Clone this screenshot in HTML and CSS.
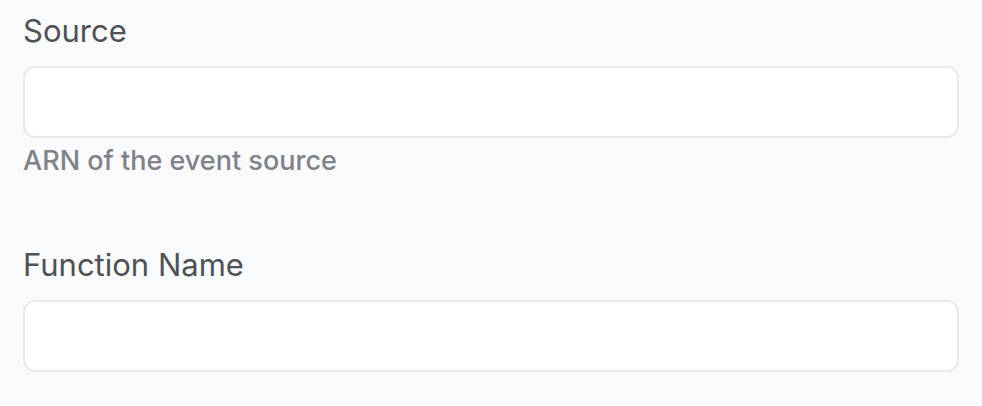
FILE: index.html
```html
<!DOCTYPE html>
<html lang="en">
<head>
<meta charset="utf-8">
<title>Event source</title>
<link rel="stylesheet" href="styles.css">
</head>
<body>
<form class="form">
  <div class="field">
    <label class="label" for="source">Source</label>
    <input class="input" id="source" type="text" aria-describedby="source-help">
    <p class="help" id="source-help">ARN of the event source</p>
  </div>
  <div class="field">
    <label class="label" for="function-name">Function Name</label>
    <input class="input" id="function-name" type="text">
  </div>
</form>
</body>
</html>
```
FILE: styles.css
```css
* {
  box-sizing: border-box;
}

body {
  margin: 0;
  background: #f9fafc;
  font-family: Inter, "Liberation Sans", sans-serif;
}

.form {
  display: flex;
  flex-direction: column;
  gap: 66px;
  padding: 12px 23px 32px;
}

.field {
  display: flex;
  flex-direction: column;
}

.label {
  margin-bottom: 16px;
  color: #505154;
  font-size: 31px;
  line-height: 38px;
}

.input {
  width: 100%;
  height: 72px;
  padding: 0 20px;
  border: 2px solid #e8e9ee;
  border-radius: 12px;
  background: #fff;
  color: #505154;
  font: inherit;
  font-size: 31px;
}

.help {
  margin: 4px 0 0;
  color: #808287;
  font-size: 27px;
  font-weight: 500;
  line-height: 38px;
}
```
